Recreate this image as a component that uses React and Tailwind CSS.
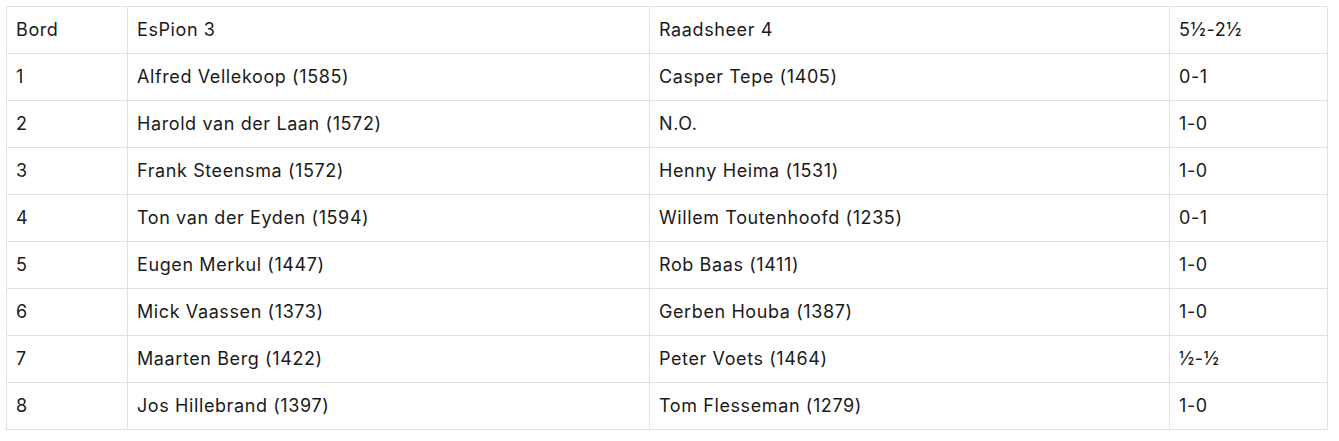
const rows = [
  ["Bord", "EsPion 3", "Raadsheer 4", "5½-2½"],
  ["1", "Alfred Vellekoop (1585)", "Casper Tepe (1405)", "0-1"],
  ["2", "Harold van der Laan (1572)", "N.O.", "1-0"],
  ["3", "Frank Steensma (1572)", "Henny Heima (1531)", "1-0"],
  ["4", "Ton van der Eyden (1594)", "Willem Toutenhoofd (1235)", "0-1"],
  ["5", "Eugen Merkul (1447)", "Rob Baas (1411)", "1-0"],
  ["6", "Mick Vaassen (1373)", "Gerben Houba (1387)", "1-0"],
  ["7", "Maarten Berg (1422)", "Peter Voets (1464)", "½-½"],
  ["8", "Jos Hillebrand (1397)", "Tom Flesseman (1279)", "1-0"],
];

export default function App() {
  return (
    <div className="bg-white min-h-screen pt-[6px] pl-[6px] font-['Inter',sans-serif] text-[18px] tracking-[0.6px] text-[#1a1a1a]">
      <table className="table-fixed border-collapse w-[1321px]">
        <colgroup>
          <col className="w-[121px]" />
          <col className="w-[522px]" />
          <col className="w-[520px]" />
          <col className="w-[158px]" />
        </colgroup>
        <tbody>
          {rows.map((row, i) => (
            <tr key={i} className="h-[47px]">
              {row.map((cell, j) => (
                <td
                  key={j}
                  className="border border-[#dee2e6] px-[9px] py-0 align-middle leading-none"
                >
                  {cell}
                </td>
              ))}
            </tr>
          ))}
        </tbody>
      </table>
    </div>
  );
}
